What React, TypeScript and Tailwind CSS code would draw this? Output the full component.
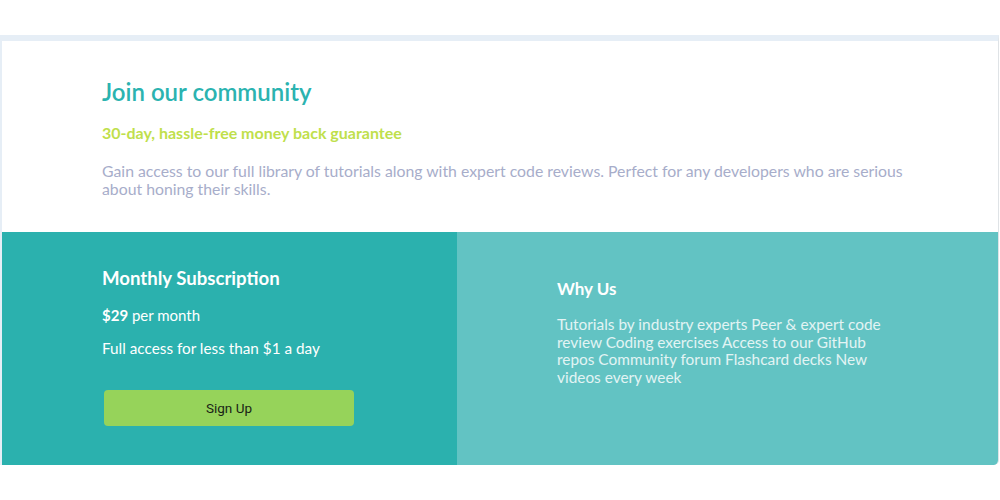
import React from 'react';

const features = [
    'Tutorials by industry experts',
    'Peer & expert code review',
    'Coding exercises',
    'Access to our GitHub repos',
    'Community forum',
    'Flashcard decks',
    'New videos every week',
];

const App: React.FC = () => {
    return (
        <div className="w-[1000px] h-[500px] bg-white pt-[35px] font-['Lato',sans-serif] overflow-hidden">
            {/* Card */}
            <div className="w-[999px] border-t-[6px] border-l-2 border-r border-[#e6eef6] border-r-[#dfe3e6] rounded-br-[5px] overflow-hidden bg-white">
                {/* Intro */}
                <div className="pl-[100px] pr-[88px] pt-[38px] pb-[34px]">
                    <h2 className="text-[24px] leading-[26px] font-semibold text-[#2bb3b0]">Join our community</h2>
                    <p className="mt-[19px] text-[16px] leading-[18px] font-bold text-[#c0df4c]">
                        30-day, hassle-free money back guarantee
                    </p>
                    <p className="mt-5 text-[15.8px] leading-[18px] text-[#a7adca]">
                        Gain access to our full library of tutorials along with expert code reviews. Perfect for any developers who are serious about honing their skills.
                    </p>
                </div>

                {/* Pricing + Why us */}
                <div className="flex h-[233px]">
                    <div className="w-[455px] bg-[#2bb1ae] pl-[100px] pt-[35px] text-white">
                        <h3 className="text-[18.6px] leading-[22px] font-bold">Monthly Subscription</h3>
                        <p className="mt-[17px] text-[15px] leading-[18px]">
                            <span className="font-bold">$29</span> per month
                        </p>
                        <p className="mt-[15px] text-[15.3px] leading-[18px]">Full access for less than $1 a day</p>
                        <button className="mt-[33px] ml-[2px] w-[250px] h-9 rounded bg-[#96d35a] text-[13.5px] text-[#1a2416] font-['Roboto',sans-serif]">
                            Sign Up
                        </button>
                    </div>
                    <div className="flex-1 bg-[#62c3c3] pl-[100px] pt-[46px]">
                        <h3 className="text-[17px] leading-[21px] font-bold text-white">Why Us</h3>
                        <p className="mt-[17px] w-[340px] text-[15.4px] leading-[17.5px] text-[#e2f4f4]">
                            {features.join(' ')}
                        </p>
                    </div>
                </div>
            </div>
        </div>
    );
};

export default App;
